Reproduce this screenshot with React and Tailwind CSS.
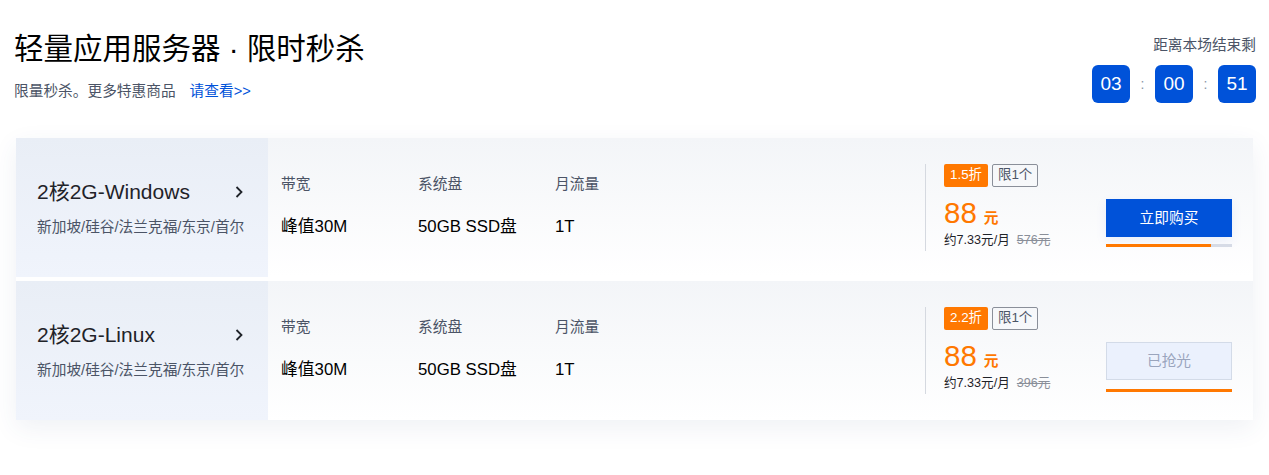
import React from "react";

const font = { fontFamily: '"Liberation Sans", "Noto Sans CJK SC", sans-serif' };

function Chevron() {
  return (
    <svg width="10" height="14" viewBox="0 0 10 14" fill="none">
      <path d="M2.5 2 L7.5 7 L2.5 12" stroke="#1f2329" strokeWidth="1.8" fill="none" />
    </svg>
  );
}

function Card({ name, discount, orig, soldOut, progress }) {
  return (
    <div className="flex h-[139px] bg-white">
      <div className="w-[252px] shrink-0 bg-gradient-to-b from-[#e9eef6] to-[#f0f4fc] pl-[21px] pr-[24px] pt-[40px]">
        <div className="flex items-center justify-between">
          <span className="text-[21px] leading-[28px] text-[#1f2329]">{name}</span>
          <Chevron />
        </div>
        <div className="mt-[11px] whitespace-nowrap text-[14.7px] leading-[20px] text-[#4b5466]">新加坡/硅谷/法兰克福/东京/首尔</div>
      </div>
      <div className="flex flex-1 bg-gradient-to-b from-[#f3f5f8] to-white">
        <div className="flex flex-1 pl-[13px] pt-[36px]">
          {[
            ["带宽", "峰值30M"],
            ["系统盘", "50GB SSD盘"],
            ["月流量", "1T"],
          ].map(([k, v]) => (
            <div key={k} className="w-[137px]">
              <div className="text-[14.7px] leading-[20px] text-[#4b5466]">{k}</div>
              <div className="mt-[21px] text-[16.8px] leading-[24px] text-[#000]">{v}</div>
            </div>
          ))}
        </div>
        <div className="flex w-[328px] pt-[26px] pr-[21px]">
          <div className="h-[87px] w-[180px] border-l border-[#d5d9e0] pl-[18px]">
            <div className="flex gap-[4px]">
              <span className="flex h-[23px] items-center rounded-[2px] bg-[#ff7800] px-[6px] text-[13.4px] text-white">{discount}</span>
              <span className="flex h-[23px] items-center rounded-[2px] border border-[#8a8f99] px-[5px] text-[13.4px] text-[#4b5466]">限1个</span>
            </div>
            <div className="mt-[10px] flex items-baseline text-[#ff7800]">
              <span className="text-[29.5px] leading-[32px]">88</span>
              <span className="ml-[7px] text-[14.7px] font-bold">元</span>
            </div>
            <div className="mt-[2px] flex text-[12.6px] leading-[18px]">
              <span className="text-[#1f2329]">约7.33元/月</span>
              <span className="ml-[7px] text-[#8a8f99] line-through">{orig}</span>
            </div>
          </div>
          <div className="ml-auto flex w-[126px] flex-col pt-[35px]">
            {soldOut ? (
              <div className="flex h-[38px] items-center justify-center border border-[#d3dbe8] bg-[#ebf1fd] text-[14.7px] text-[#9aa5bd]">已抢光</div>
            ) : (
              <div className="flex h-[38px] items-center justify-center bg-[#0052d9] text-[14.7px] text-white shadow-[0_4px_12px_rgba(0,82,217,0.08)]">立即购买</div>
            )}
            <div className={`${soldOut ? "mt-[9px]" : "mt-[7px]"} h-[3px] w-full bg-[#d6dbe6]`}>
              <div className="h-full bg-[#ff7800]" style={{ width: `${progress}%` }} />
            </div>
          </div>
        </div>
      </div>
    </div>
  );
}

export default function App() {
  return (
    <div className="min-h-[475px] w-[1269px] bg-white" style={font}>
      <div className="flex justify-between pl-[14px] pr-[13px] pt-[30px]">
        <div>
          <h1 className="text-[29.5px] leading-[37px] text-[#000]">轻量应用服务器 · 限时秒杀</h1>
          <div className="mt-[14px] text-[14.7px] leading-[20px] text-[#4b5466]">
            限量秒杀。更多特惠商品<a className="ml-[14px] text-[#0052d9]">请查看&gt;&gt;</a>
          </div>
        </div>
        <div className="flex flex-col items-end pt-[5px]">
          <div className="text-[14.7px] leading-[20px] text-[#4b5466]">距离本场结束剩</div>
          <div className="mt-[10px] flex items-center">
            {["03", "00", "51"].map((n, i) => (
              <React.Fragment key={n}>
                {i > 0 && <span className="w-[25px] text-center text-[14px] text-[#8a95a8]">:</span>}
                <span className="flex h-[38px] w-[38px] items-center justify-center rounded-[6px] bg-[#0052d9] text-[19px] text-white">{n}</span>
              </React.Fragment>
            ))}
          </div>
        </div>
      </div>
      <div className="mx-[16px] mt-[35px] flex flex-col gap-[4px] shadow-[0_8px_24px_rgba(52,76,130,0.08)]">
        <Card name="2核2G-Windows" discount="1.5折" orig="576元" progress={83} />
        <Card name="2核2G-Linux" discount="2.2折" orig="396元" soldOut progress={100} />
      </div>
    </div>
  );
}
